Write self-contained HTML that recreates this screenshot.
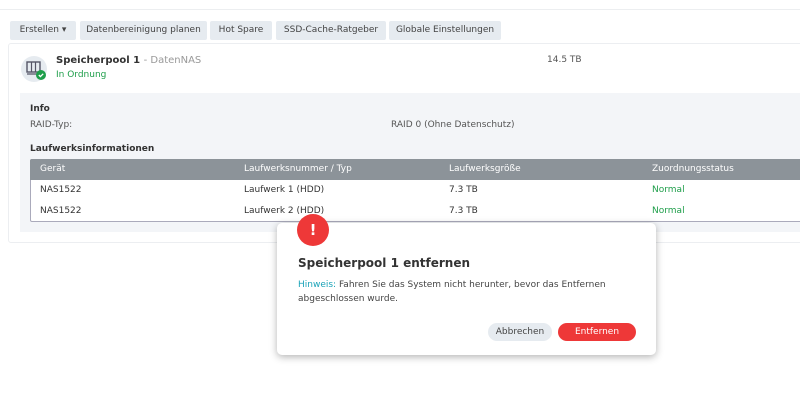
<!DOCTYPE html>
<html><head><meta charset="utf-8"><style>
*{margin:0;padding:0;box-sizing:border-box}
body{width:800px;height:410px;overflow:hidden;background:#fff;font-family:"DejaVu Sans","Liberation Sans",sans-serif;font-size:9px;color:#333;position:relative}
.a{position:absolute;white-space:nowrap}
.btn{position:absolute;top:21px;height:19px;background:#e6ebf0;border-radius:2px;line-height:19px;text-align:center;color:#444;font-size:9px}
.th{color:#fff}
</style></head><body>
<div class="a" style="left:0;top:9px;width:800px;height:1px;background:#eceef0"></div>
<div class="btn" style="left:10px;width:66px">Erstellen ▾</div>
<div class="btn" style="left:80px;width:127px">Datenbereinigung planen</div>
<div class="btn" style="left:210px;width:62px">Hot Spare</div>
<div class="btn" style="left:276px;width:110px">SSD-Cache-Ratgeber</div>
<div class="btn" style="left:389px;width:112px">Globale Einstellungen</div>
<div class="a" style="left:8px;top:43px;width:800px;height:200px;border:1px solid #eceef1;border-radius:3px;background:#fff"></div>
<div class="a" style="left:21px;top:56px;width:26px;height:26px;border-radius:50%;background:#e6ebf0"></div>
<svg class="a" style="left:25px;top:60px" width="24" height="22" viewBox="0 0 24 22"><rect x="2" y="2" width="13" height="10" fill="none" stroke="#556" stroke-width="1.4"/><path d="M6.5 2v10M10.5 2v10M2 14h13" stroke="#556" stroke-width="1.2"/><circle cx="16" cy="15" r="5" fill="#1e9e4a"/><path d="M13.8 15l1.6 1.6 2.8-2.8" stroke="#fff" stroke-width="1.3" fill="none"/></svg>
<div class="a" style="left:56px;top:55px;font-weight:bold;font-size:10px">Speicherpool 1 <span style="font-weight:normal;color:#999">- DatenNAS</span></div>
<div class="a" style="left:56px;top:70px;color:#1e9e4a">In Ordnung</div>
<div class="a" style="left:547px;top:55px;color:#555">14.5 TB</div>
<div class="a" style="left:20px;top:93px;width:800px;height:139px;background:#f3f5f8"></div>
<div class="a" style="left:30px;top:104px;font-weight:bold">Info</div>
<div class="a" style="left:30px;top:120px;color:#555">RAID-Typ:</div>
<div class="a" style="left:391px;top:120px;color:#555">RAID 0 (Ohne Datenschutz)</div>
<div class="a" style="left:30px;top:144px;font-weight:bold;font-size:9px">Laufwerksinformationen</div>
<div class="a" style="left:30px;top:159px;width:780px;height:63px;border:1px solid #aab;background:#fff;border-radius:2px"></div>
<div class="a" style="left:30px;top:159px;width:780px;height:21px;background:#8c9399;border-radius:2px 0 0 0"></div>
<div class="a th" style="left:40px;top:164px">Gerät</div>
<div class="a th" style="left:244px;top:164px">Laufwerksnummer / Typ</div>
<div class="a th" style="left:449px;top:164px">Laufwerksgröße</div>
<div class="a th" style="left:652px;top:164px">Zuordnungsstatus</div>
<div class="a" style="left:40px;top:185px">NAS1522</div>
<div class="a" style="left:244px;top:185px">Laufwerk 1 (HDD)</div>
<div class="a" style="left:449px;top:185px">7.3 TB</div>
<div class="a" style="left:652px;top:185px;color:#1e9e4a">Normal</div>
<div class="a" style="left:40px;top:206px">NAS1522</div>
<div class="a" style="left:244px;top:206px">Laufwerk 2 (HDD)</div>
<div class="a" style="left:449px;top:206px">7.3 TB</div>
<div class="a" style="left:652px;top:206px;color:#1e9e4a">Normal</div>
<div class="a" style="left:277px;top:223px;width:379px;height:132px;background:#fff;border-radius:5px;box-shadow:0 2px 8px rgba(0,0,0,.3)"></div>
<div class="a" style="left:297px;top:214px;width:32px;height:32px;border-radius:50%;background:#ee3838;color:#fff;text-align:center;line-height:32px;font-weight:bold;font-size:15px">!</div>
<div class="a" style="left:298px;top:256px;font-weight:bold;font-size:12px;color:#333">Speicherpool 1 entfernen</div>
<div class="a" style="left:298px;top:280px;color:#444">
<span style="color:#1aa3b8">Hinweis:</span> Fahren Sie das System nicht herunter, bevor das Entfernen</div>
<div class="a" style="left:298px;top:294px;color:#444">abgeschlossen wurde.</div>
<div class="a" style="left:488px;top:323px;width:64px;height:18px;border-radius:9px;background:#e6ebf0;text-align:center;line-height:18px;color:#444">Abbrechen</div>
<div class="a" style="left:558px;top:323px;width:78px;height:18px;border-radius:9px;background:#ee3838;text-align:center;line-height:18px;color:#fff">Entfernen</div>
</body></html>
